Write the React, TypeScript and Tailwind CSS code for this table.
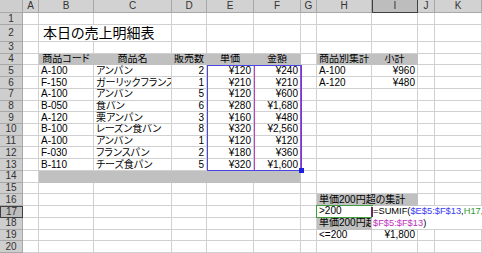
import React from 'react';

type Cell = {
  t?: React.ReactNode;
  a?: 'l' | 'r' | 'c';
  fill?: boolean;
  span?: number;
  big?: boolean;
};

const LETTERS = ['A', 'B', 'C', 'D', 'E', 'F', 'G', 'H', 'I', 'J', 'K'];

const data: Record<number, Record<string, Cell>> = {
  2: { B: { t: '本日の売上明細表', span: 2, big: true } },
  4: {
    B: { t: '商品コード', a: 'c', fill: true },
    C: { t: '商品名', a: 'c', fill: true },
    D: { t: '販売数', a: 'c', fill: true },
    E: { t: '単価', a: 'c', fill: true },
    F: { t: '金額', a: 'c', fill: true },
    H: { t: '商品別集計', fill: true },
    I: { t: '小計', a: 'c', fill: true },
  },
  14: { B: { fill: true, span: 5 } },
  16: { H: { t: '単価200円超の集計', fill: true, span: 2 } },
  17: { H: { t: '>200' } },
  18: { H: { t: '単価200円超の集計', fill: true } },
  19: { H: { t: '<=200' }, I: { t: '¥1,800', a: 'r' } },
};

const rows: [string, string, string, string, string][] = [
  ['A-100', 'アンパン', '2', '¥120', '¥240'],
  ['F-150', 'ガーリックフランス', '1', '¥210', '¥210'],
  ['A-100', 'アンパン', '5', '¥120', '¥600'],
  ['B-050', '食パン', '6', '¥280', '¥1,680'],
  ['A-120', '栗アンパン', '3', '¥160', '¥480'],
  ['B-100', 'レーズン食パン', '8', '¥320', '¥2,560'],
  ['A-100', 'アンパン', '1', '¥120', '¥120'],
  ['F-030', 'フランスパン', '2', '¥180', '¥360'],
  ['B-110', 'チーズ食パン', '5', '¥320', '¥1,600'],
];
rows.forEach((r, i) => {
  const n = i + 5;
  data[n] = {
    ...(data[n] || {}),
    B: { t: r[0] },
    C: { t: r[1] },
    D: { t: r[2], a: 'r' },
    E: { t: r[3], a: 'r' },
    F: { t: r[4], a: 'r' },
  };
});
data[5] = { ...data[5], H: { t: 'A-100' }, I: { t: '¥960', a: 'r' } };
data[6] = { ...data[6], H: { t: 'A-120' }, I: { t: '¥480', a: 'r' } };

function renderRow(r: number) {
  const out: React.ReactNode[] = [];
  const active = r === 17;
  out.push(
    <div
      key={`h${r}`}
      className={`flex items-center justify-center text-[10px] leading-none text-[#333] border-r border-b ${
        active ? 'border-[#404040] bg-[#bdbdbd] border-l border-t' : 'bg-[#cecece] border-[#a8a8a8]'
      }`}
    >
      {r}
    </div>
  );
  const rowData = data[r] || {};
  let i = 0;
  while (i < LETTERS.length) {
    const col = LETTERS[i];
    const c = rowData[col];
    const span = c?.span ?? 1;
    const justify =
      c?.a === 'r' ? 'justify-end pr-[2px]' : c?.a === 'c' ? 'justify-center' : 'justify-start pl-[2px]';
    const spanCls = span === 2 ? 'col-span-2' : span === 5 ? 'col-span-5' : '';
    out.push(
      <div
        key={`${col}${r}`}
        className={`flex items-center overflow-hidden whitespace-nowrap border-r border-b ${spanCls} ${justify} ${
          c?.fill ? 'bg-[#c0c0c0] border-[#c0c0c0]' : 'bg-white border-[#d0d0d0]'
        } ${c?.big ? 'text-[14px] pl-[4px]' : 'text-[10px]'} leading-none`}
      >
        {c?.t}
      </div>
    );
    i += span;
  }
  return out;
}

export default function App() {
  const rowNums = Array.from({ length: 20 }, (_, i) => i + 1);
  return (
    <div className="relative w-[482px] h-[253px] overflow-hidden bg-white text-black font-['Liberation_Sans','Noto_Sans_CJK_JP',sans-serif] [font-feature-settings:'palt']">
      <div className="grid grid-cols-[23px_16px_55px_78px_35px_47px_47px_16px_55px_46px_17px_47px] grid-rows-[13px_12px_17px_repeat(18,11.72px)]">
        <div className="bg-[#cecece] border-r border-b border-[#a8a8a8]" />
        {LETTERS.map((l) => (
          <div
            key={l}
            className={`flex items-center justify-center text-[10px] leading-none text-[#333] border-r border-b ${
              l === 'I' ? 'bg-[#bdbdbd] border-[#404040] border-l' : 'bg-[#d2d2d2] border-[#a8a8a8]'
            }`}
          >
            {l}
          </div>
        ))}
        {rowNums.map((r) => renderRow(r))}
      </div>

      {/* F5:F13 purple range */}
      <div className="absolute left-[254px] top-[65px] w-[47px] h-[106px] border border-[#c040c0]" />
      {/* E5:F13 blue range */}
      <div className="absolute left-[207px] top-[65px] w-[95px] h-[106px] border border-[#4848e8]" />
      <div className="absolute left-[254px] top-[66px] w-px h-[104px] bg-[#c040c0]" />
      <div className="absolute left-[299px] top-[168px] w-[5px] h-[5px] bg-[#2020e0]" />
      {/* H17 green range */}
      <div className="absolute left-[316px] top-[205px] w-[57px] h-[13px] border border-[#40a040]" />

      {/* Edit box over I17 */}
      <div className="absolute left-[372px] top-[206px] w-[110px] h-[23px] bg-white flex flex-col text-[9.3px] leading-[11.5px] whitespace-nowrap pl-[1px]">
        <div>
          <span>=SUMIF(</span>
          <span className="text-[#3a3af0]">$E$5:$F$13</span>
          <span>,</span>
          <span className="text-[#2f9a2f]">H17</span>
          <span>,</span>
        </div>
        <div>
          <span className="text-[#c030c0]">$F$5:$F$13</span>
          <span>)</span>
        </div>
      </div>
      <div className="absolute left-[371px] top-[207px] w-[2px] h-[10px] bg-[#603060]" />
    </div>
  );
}
